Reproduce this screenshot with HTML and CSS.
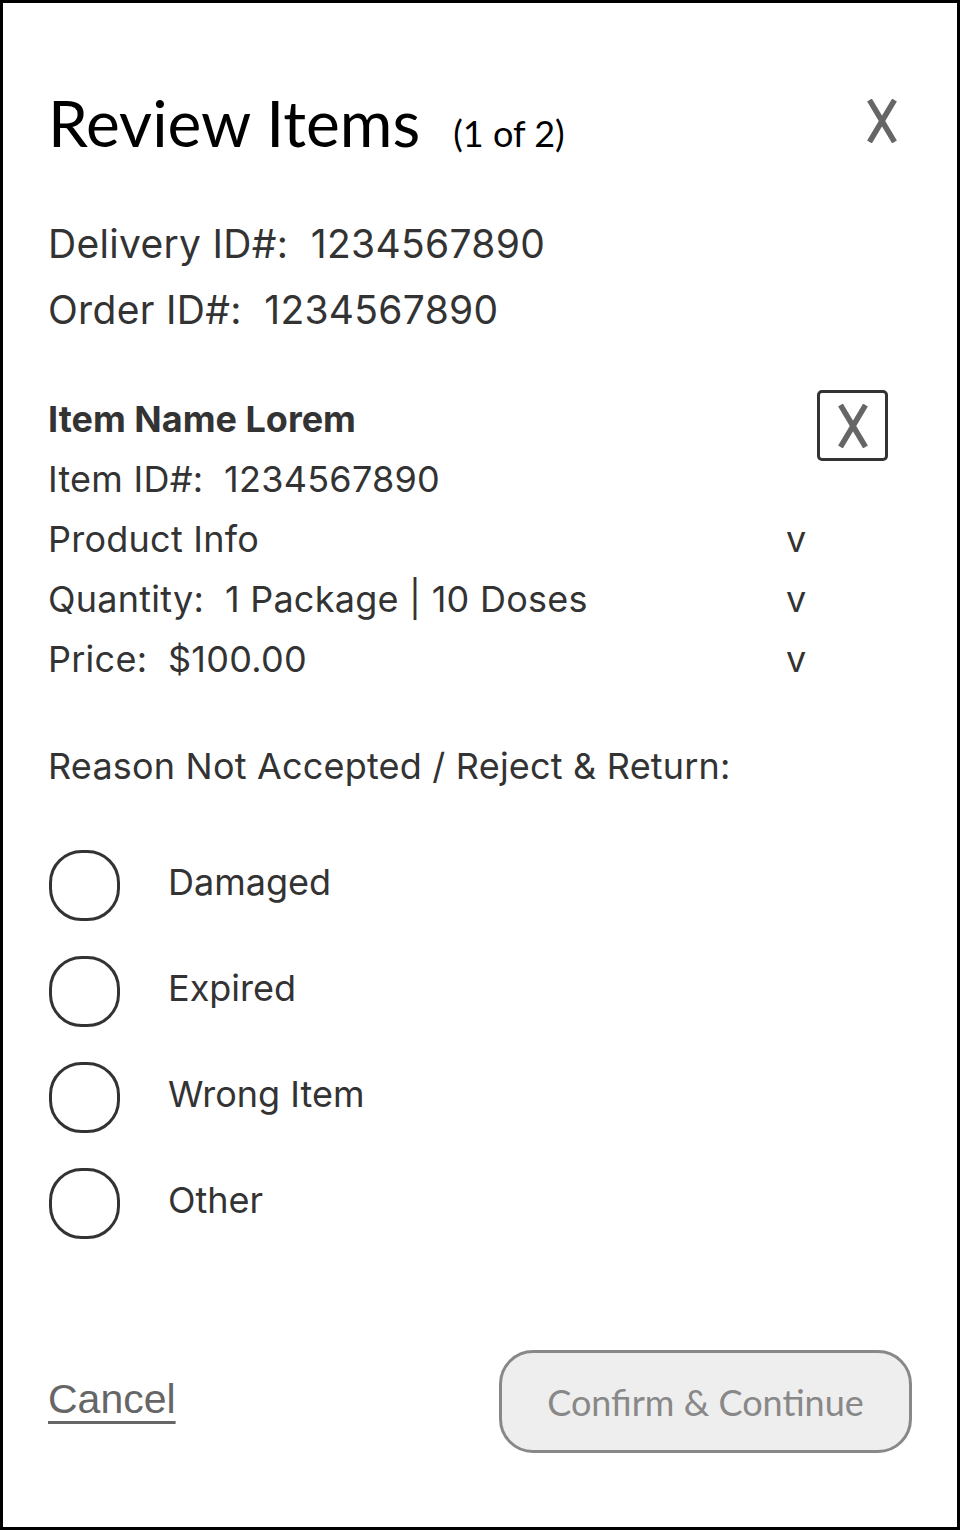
FILE: index.html
```html
<!DOCTYPE html>
<html lang="en">
<head>
<meta charset="utf-8">
<title>Review Items</title>
<link rel="stylesheet" href="styles.css">
</head>
<body>
<div class="modal">
  <header class="header">
    <div class="title-group">
      <h1 class="title">Review Items</h1>
      <span class="count">(1 of 2)</span>
    </div>
    <svg class="close" width="30" height="44" viewBox="0 0 30 44" aria-label="Close">
      <line x1="2.5" y1="1" x2="27.5" y2="43" stroke="#666" stroke-width="5.5"/>
      <line x1="27.5" y1="1" x2="2.5" y2="43" stroke="#666" stroke-width="5.5"/>
    </svg>
  </header>

  <section class="ids">
    <p class="id-line">Delivery ID#:&nbsp; 1234567890</p>
    <p class="id-line">Order ID#:&nbsp; 1234567890</p>
  </section>

  <section class="item">
    <div class="item-rows">
      <div class="row row-name">Item Name Lorem</div>
      <div class="row">Item ID#:&nbsp; 1234567890</div>
      <div class="row"><span>Product Info</span><span class="chev">v</span></div>
      <div class="row"><span>Quantity:&nbsp; 1 Package | 10 Doses</span><span class="chev">v</span></div>
      <div class="row"><span>Price:&nbsp; $100.00</span><span class="chev">v</span></div>
    </div>
    <div class="remove-box">
      <svg width="30" height="44" viewBox="0 0 30 44" aria-label="Remove item">
        <line x1="2.5" y1="1" x2="27.5" y2="43" stroke="#666" stroke-width="5.5"/>
        <line x1="27.5" y1="1" x2="2.5" y2="43" stroke="#666" stroke-width="5.5"/>
      </svg>
    </div>
  </section>

  <p class="reason">Reason Not Accepted / Reject &amp; Return:</p>

  <ul class="options">
    <li class="option"><span class="radio"></span><span class="label">Damaged</span></li>
    <li class="option"><span class="radio"></span><span class="label">Expired</span></li>
    <li class="option"><span class="radio"></span><span class="label">Wrong Item</span></li>
    <li class="option"><span class="radio"></span><span class="label">Other</span></li>
  </ul>

  <footer class="footer">
    <a class="cancel" href="#">Cancel</a>
    <button class="confirm" type="button">Confirm &amp; Continue</button>
  </footer>
</div>
</body>
</html>
```

FILE: styles.css
```css
* { box-sizing: border-box; }

html, body {
  margin: 0;
  padding: 0;
  background: #fff;
}

.modal {
  width: 960px;
  height: 1530px;
  border: 3px solid #000;
  padding: 89px 45px 0 45px;
  font-family: Inter, "Noto Sans", sans-serif;
  color: #333;
}

.header {
  display: flex;
  justify-content: space-between;
  align-items: flex-start;
  margin-right: 15px;
}

.title-group {
  display: flex;
  align-items: baseline;
  gap: 33px;
}

.title {
  margin: 0;
  font-family: Lato, "Open Sans", sans-serif;
  font-weight: 400;
  font-size: 64px;
  line-height: 62px;
  color: #000;
}

.count {
  font-family: Lato, "Open Sans", sans-serif;
  font-size: 36px;
  color: #000;
}

.close {
  display: block;
  margin-top: 7px;
}

.ids {
  margin-top: 56px;
}

.id-line {
  margin: 0;
  font-size: 39px;
  line-height: 66px;
  letter-spacing: 0.3px;
  color: #333;
}

.item {
  margin-top: 46px;
  display: grid;
  grid-template-columns: 758px 70px;
  column-gap: 11px;
  align-items: start;
}

.row {
  display: flex;
  justify-content: space-between;
  font-size: 36px;
  line-height: 60px;
  height: 60px;
  letter-spacing: 0.25px;
}

.row-name {
  font-weight: 700;
  letter-spacing: 0;
}

.chev {
  width: 20px;
  text-align: center;
}

.remove-box {
  margin-top: 1px;
  width: 71px;
  height: 71px;
  border: 3px solid #333;
  border-radius: 5px;
  display: flex;
  align-items: center;
  justify-content: center;
}

.reason {
  margin: 47px 0 0;
  font-size: 36px;
  line-height: 60px;
  letter-spacing: 0.2px;
}

.options {
  list-style: none;
  margin: 54px 0 0;
  padding: 0;
  display: flex;
  flex-direction: column;
  gap: 35px;
}

.option {
  display: flex;
  align-items: center;
  gap: 48px;
}

.radio {
  flex: none;
  width: 71px;
  height: 71px;
  margin-left: 1px;
  border: 3px solid #333;
  border-radius: 46%;
}

.label {
  font-size: 36px;
  line-height: 60px;
  padding-bottom: 8px;
}

.footer {
  margin-top: 111px;
  display: flex;
  justify-content: space-between;
  align-items: center;
}

.cancel {
  font-family: "Liberation Sans", Arial, sans-serif;
  font-size: 41px;
  color: #666;
  text-decoration: underline;
  text-decoration-thickness: 3px;
  text-underline-offset: 8px;
  margin-left: 0;
  margin-bottom: 4px;
}

.confirm {
  width: 413px;
  height: 103px;
  border: 3px solid #888;
  border-radius: 34px;
  background: #eee;
  color: #888;
  font-family: Lato, "Open Sans", sans-serif;
  font-size: 36px;
  padding: 0;
  cursor: pointer;
}
```
